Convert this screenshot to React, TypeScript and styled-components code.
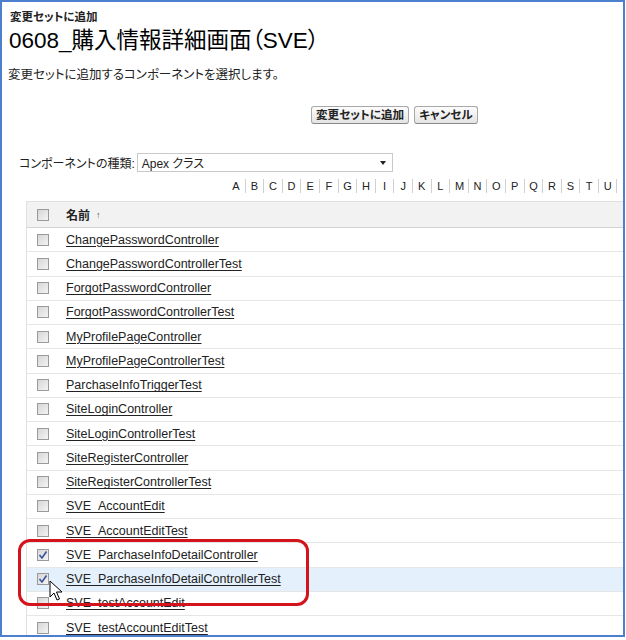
import React from 'react';
import styled, { createGlobalStyle } from 'styled-components';

const GlobalStyle = createGlobalStyle`
  body {
    margin: 0;
    background: #fff;
    font-family: 'Liberation Sans', Arial, 'Noto Sans CJK JP', sans-serif;
    font-feature-settings: 'palt';
    color: #000;
  }
`;

const Frame = styled.div`
  position: relative;
  box-sizing: border-box;
  width: 625px;
  height: 637px;
  border: 2px solid #4d7fcf;
  overflow: hidden;
  background: #fff;
`;

const SmallLabel = styled.div`
  margin: 9px 0 0 8px;
  font-size: 11.5px;
  line-height: 13px;
  font-weight: bold;
  color: #222;
`;

const Title = styled.h1`
  margin: 3px 0 0 7px;
  font-size: 22.5px;
  line-height: 28px;
  font-weight: normal;
  color: #000;
`;

const Description = styled.p`
  margin: 12px 0 0 6px;
  font-size: 12.5px;
  line-height: 16px;
  color: #222;
`;

const ButtonRow = styled.div`
  display: flex;
  gap: 5px;
  margin-top: 23px;
  padding-left: 309px;
`;

const Button = styled.button`
  height: 18px;
  padding: 0 4px;
  border: 1px solid #a8a8a8;
  border-bottom-color: #888;
  border-radius: 3px;
  background: linear-gradient(#fdfdfd, #e4e4e4);
  font-family: 'Liberation Sans', 'Noto Sans CJK JP', sans-serif;
  font-feature-settings: 'palt';
  font-size: 11.6px;
  font-weight: bold;
  line-height: 16px;
  color: #222;
`;

const SelectRow = styled.div`
  display: flex;
  align-items: center;
  gap: 2px;
  margin-top: 29px;
  padding-left: 17px;
`;

const FieldLabel = styled.span`
  font-size: 12px;
  color: #222;
`;

const SelectBox = styled.div`
  box-sizing: border-box;
  display: flex;
  align-items: center;
  justify-content: space-between;
  width: 256px;
  height: 19px;
  padding: 0 6px 0 4px;
  border: 1px solid #c9c9c9;
  background: #fff;
  font-size: 12px;
  color: #222;
`;

const Caret = styled.span`
  width: 0;
  height: 0;
  border-left: 3.5px solid transparent;
  border-right: 3.5px solid transparent;
  border-top: 4px solid #222;
`;

const AlphaBar = styled.div`
  display: flex;
  flex-wrap: nowrap;
  margin-top: 7px;
  padding-left: 225px;
  height: 14px;
  white-space: nowrap;
`;

const Letter = styled.span<{ $first?: boolean }>`
  padding: 0 4.8px;
  border-left: ${(p) => (p.$first ? 'none' : '1px solid #d0d0d0')};
  font-size: 11px;
  line-height: 14px;
  color: #222;
  min-width: 8px;
  text-align: center;
`;

const Table = styled.div`
  margin: 8px 0 0 24px;
  border-top: 1px solid #e0e0e0;
  border-left: 1px solid #e0e0e0;
`;

const HeaderRow = styled.div`
  box-sizing: border-box;
  display: flex;
  align-items: center;
  height: 26px;
  background: #f2f2f2;
  border-bottom: 1px solid #d4d4d4;
`;

const Row = styled.div<{ $hover?: boolean }>`
  box-sizing: border-box;
  display: flex;
  align-items: center;
  height: 24.25px;
  background: ${(p) => (p.$hover ? '#e4f0fb' : '#fff')};
  border-bottom: 1px solid #e6e6e6;
`;

const CheckCell = styled.div`
  width: 39px;
  display: flex;
  padding-left: 10px;
  box-sizing: border-box;
`;

const Box = styled.span`
  position: relative;
  box-sizing: border-box;
  width: 12px;
  height: 12px;
  border: 1px solid #9a9a9a;
  background: linear-gradient(135deg, #d6d6d6, #f4f4f4);
  display: flex;
  align-items: center;
  justify-content: center;
`;

const HeaderName = styled.span`
  font-size: 12px;
  font-weight: bold;
  color: #222;
  display: flex;
  align-items: center;
  gap: 6px;
`;

const SortArrow = styled.span`
  font-size: 9px;
  font-weight: normal;
  color: #555;
`;

const Link = styled.a`
  font-size: 12.5px;
  color: #222;
  text-decoration: underline;
  text-underline-offset: 2px;
`;

const Highlight = styled.div`
  position: absolute;
  left: 16px;
  top: 537px;
  width: 291px;
  height: 67px;
  box-sizing: border-box;
  border: 3px solid #d4141c;
  border-radius: 12px;
  pointer-events: none;
`;

const Cursor = styled.svg`
  position: absolute;
  left: 47px;
  top: 578px;
`;

const rows = [
  'ChangePasswordController',
  'ChangePasswordControllerTest',
  'ForgotPasswordController',
  'ForgotPasswordControllerTest',
  'MyProfilePageController',
  'MyProfilePageControllerTest',
  'ParchaseInfoTriggerTest',
  'SiteLoginController',
  'SiteLoginControllerTest',
  'SiteRegisterController',
  'SiteRegisterControllerTest',
  'SVE_AccountEdit',
  'SVE_AccountEditTest',
  'SVE_ParchaseInfoDetailController',
  'SVE_ParchaseInfoDetailControllerTest',
  'SVE_testAccountEdit',
  'SVE_testAccountEditTest',
];

const checked = new Set(['SVE_ParchaseInfoDetailController', 'SVE_ParchaseInfoDetailControllerTest']);

// only A–U fit in the visible width
const letters = 'ABCDEFGHIJKLMNOPQRSTU'.split('');

function CheckBox({ on }: { on?: boolean }) {
  return (
    <Box>
      {on && (
        <svg width="10" height="10" viewBox="0 0 10 10">
          <path d="M1.5 5 L4 8 L8.5 1.5" fill="none" stroke="#3b4f9a" strokeWidth="1.6" />
        </svg>
      )}
    </Box>
  );
}

export default function App() {
  return (
    <>
      <GlobalStyle />
      <Frame>
        <SmallLabel>変更セットに追加</SmallLabel>
        <Title>0608_購入情報詳細画面（SVE）</Title>
        <Description>変更セットに追加するコンポーネントを選択します。</Description>
        <ButtonRow>
          <Button>変更セットに追加</Button>
          <Button>キャンセル</Button>
        </ButtonRow>
        <SelectRow>
          <FieldLabel>コンポーネントの種類:</FieldLabel>
          <SelectBox>
            <span>Apex クラス</span>
            <Caret />
          </SelectBox>
        </SelectRow>
        <AlphaBar>
          {letters.map((l, i) => (
            <Letter key={l} $first={i === 0}>
              {l}
            </Letter>
          ))}
          <Letter />
        </AlphaBar>
        <Table>
          <HeaderRow>
            <CheckCell>
              <CheckBox />
            </CheckCell>
            <HeaderName>
              名前 <SortArrow>↑</SortArrow>
            </HeaderName>
          </HeaderRow>
          {rows.map((name) => (
            <Row key={name} $hover={name === 'SVE_ParchaseInfoDetailControllerTest'}>
              <CheckCell>
                <CheckBox on={checked.has(name)} />
              </CheckCell>
              <Link href="#">{name}</Link>
            </Row>
          ))}
        </Table>
        <Highlight />
        <Cursor width="14" height="22" viewBox="0 0 14 22">
          <path
            d="M1 1 L1 17 L5 13 L8 20 L10.5 19 L7.5 12 L13 12 Z"
            fill="#fff"
            stroke="#000"
            strokeWidth="1"
            strokeLinejoin="round"
          />
        </Cursor>
      </Frame>
    </>
  );
}
